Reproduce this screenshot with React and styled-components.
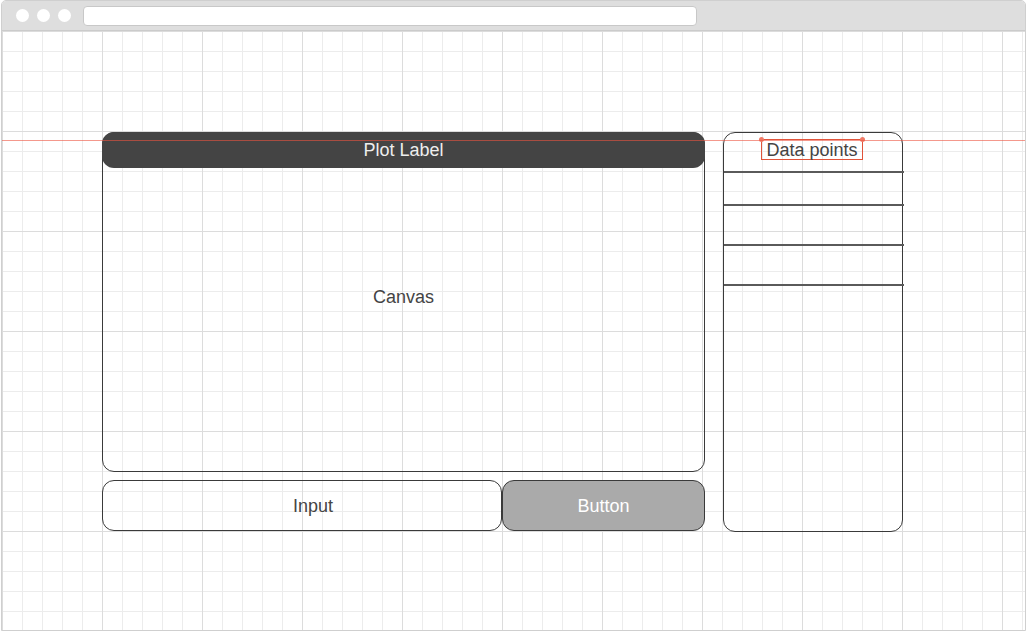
import React from "react";
import styled, { createGlobalStyle } from "styled-components";

const GlobalStyles = createGlobalStyle`
  html, body {
    margin: 0;
    padding: 0;
    background: #ffffff;
    font-family: "Liberation Sans", Arial, sans-serif;
  }
`;

const Window = styled.div`
  position: relative;
  width: 1023px;
  height: 629px;
  margin-left: 1px;
  border: 1px solid #cfcfcf;
  border-radius: 5px 5px 0 0;
  display: flex;
  flex-direction: column;
  overflow: hidden;
`;

const TitleBar = styled.div`
  height: 29px;
  flex: none;
  background: #dedede;
  border-bottom: 1px solid #cbcbcb;
  display: flex;
  align-items: center;
  padding-left: 14px;
  gap: 8px;
`;

const Dot = styled.span`
  width: 13px;
  height: 13px;
  border-radius: 50%;
  background: #ffffff;
`;

const UrlBar = styled.div`
  margin-left: 4px;
  width: 612px;
  height: 18px;
  background: #ffffff;
  border: 1px solid #c8c8c8;
  border-radius: 4px;
`;

const Board = styled.div`
  flex: 1;
  position: relative;
  background-color: #ffffff;
  background-image:
    linear-gradient(to right, #dcdcdc 1px, transparent 1px),
    linear-gradient(to bottom, #dcdcdc 1px, transparent 1px),
    linear-gradient(to right, #ececec 1px, transparent 1px),
    linear-gradient(to bottom, #ececec 1px, transparent 1px);
  background-size: 100px 100px, 100px 100px, 20px 20px, 20px 20px;
  padding: 101px 0 0 100px;
  display: flex;
  align-items: flex-start;
  gap: 18px;
`;

const GuideLine = styled.div`
  position: absolute;
  z-index: 2;
  left: 0;
  right: 0;
  top: 109px;
  height: 1px;
  background: rgba(236, 84, 64, 0.6);
`;

const LeftColumn = styled.div`
  width: 603px;
  display: flex;
  flex-direction: column;
  gap: 8px;
`;

const CanvasPanel = styled.div`
  height: 340px;
  box-sizing: border-box;
  border: 1px solid #3a3a3a;
  border-radius: 12px;
  display: flex;
  flex-direction: column;
`;

const PlotLabel = styled.div`
  height: 36px;
  box-sizing: border-box;
  padding-top: 1px;
  margin: -1px -1px 0;
  background: #444444;
  border-radius: 12px;
  color: #eeeeee;
  font-size: 18px;
  display: flex;
  align-items: center;
  justify-content: center;
`;

const CanvasArea = styled.div`
  flex: 1;
  display: flex;
  align-items: center;
  justify-content: center;
  color: #444444;
  font-size: 18px;
  padding-bottom: 44px;
`;

const ControlRow = styled.div`
  height: 51px;
  display: flex;
`;

const InputBox = styled.div`
  width: 400px;
  box-sizing: border-box;
  border: 1px solid #3a3a3a;
  border-radius: 12px;
  padding: 2px 0 0 22px;
  display: flex;
  align-items: center;
  justify-content: center;
  color: #444444;
  font-size: 18px;
`;

const ActionButton = styled.div`
  flex: 1;
  box-sizing: border-box;
  padding-top: 2px;
  background: #aaaaaa;
  border: 1px solid #3a3a3a;
  border-radius: 12px;
  display: flex;
  align-items: center;
  justify-content: center;
  color: #ffffff;
  font-size: 18px;
`;

const DataPanel = styled.div`
  width: 180px;
  height: 400px;
  box-sizing: border-box;
  border: 1px solid #3a3a3a;
  border-radius: 12px;
  display: flex;
  flex-direction: column;
`;

const DataHeader = styled.div`
  height: 38px;
  display: flex;
  justify-content: center;
  align-items: flex-start;
  padding: 6px 2px 0 0;
  box-sizing: border-box;
`;

const SelectedLabel = styled.span`
  position: relative;
  border: 1px solid #e0533a;
  padding: 1px 4px 0;
  color: #444444;
  font-size: 18px;
  line-height: 18px;
  &::before,
  &::after {
    content: "";
    position: absolute;
    top: -3px;
    width: 5px;
    height: 5px;
    border-radius: 50%;
    background: #f07a66;
  }
  &::before {
    left: -3px;
  }
  &::after {
    right: -3px;
  }
`;

const DataRow = styled.div`
  height: ${p => p.$h}px;
  border-top: 2px solid #5a5a5a;
  margin-right: -2px;
`;

export default function App() {
  return (
    <>
      <GlobalStyles />
      <Window>
        <TitleBar>
          <Dot />
          <Dot />
          <Dot />
          <UrlBar />
        </TitleBar>
        <Board>
          <GuideLine />
          <LeftColumn>
            <CanvasPanel>
              <PlotLabel>Plot Label</PlotLabel>
              <CanvasArea>Canvas</CanvasArea>
            </CanvasPanel>
            <ControlRow>
              <InputBox>Input</InputBox>
              <ActionButton>Button</ActionButton>
            </ControlRow>
          </LeftColumn>
          <DataPanel>
            <DataHeader>
              <SelectedLabel>Data points</SelectedLabel>
            </DataHeader>
            <DataRow $h={31} />
            <DataRow $h={38} />
            <DataRow $h={38} />
            <DataRow $h={38} />
          </DataPanel>
        </Board>
      </Window>
    </>
  );
}
